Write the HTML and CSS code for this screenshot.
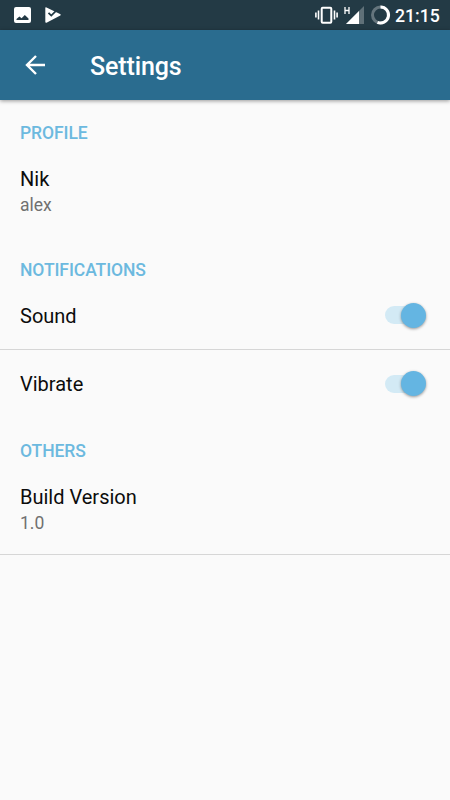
FILE: index.html
```html
<!DOCTYPE html>
<html lang="en">
<head>
<meta charset="utf-8">
<title>Settings</title>
<link rel="stylesheet" href="styles.css">
</head>
<body>
<div class="status">
  <svg class="notices" width="70" height="30" viewBox="0 0 70 30">
    <path fill="#fff" fill-rule="evenodd" d="M16 7h13a2 2 0 0 1 2 2v12a2 2 0 0 1-2 2H16a2 2 0 0 1-2-2V9a2 2 0 0 1 2-2zM16.500 20h12v-1.500l-3.700-3.500-3.200 3.300-2.200-1.800-2.900 2.500z"/>
    <path fill="#fff" d="M46 7.200L60.500 14.300Q61 15 60.300 15.600L46.500 22.800Q45.300 23 45.300 22V8Q45.300 7 46 7.200z"/>
    <path fill="none" stroke="#233a45" stroke-width="1.800" d="M48.500 12.800l2.800 2.800 6.200-6.200"/>
  </svg>
  <svg class="system" width="85" height="30" viewBox="310 0 85 30">
    <g fill="none" stroke="#fff">
      <rect x="321.700" y="7.700" width="9.600" height="15" rx="1" stroke-width="2"/>
      <path stroke-width="1.600" d="M318.500 10.500v9M315.900 12.500v5M334.500 10.500v9M337.100 12.500v5"/>
      <path stroke-width="1.300" d="M345 7v7M349 7v7M345 10.500h4"/>
    </g>
    <path fill="#5f7078" d="M364 6v18H346z"/>
    <path fill="#fff" d="M359 11V24H346z"/>
    <circle cx="380.500" cy="15" r="8" fill="none" stroke="#65757d" stroke-width="3"/>
    <path fill="none" stroke="#fff" stroke-width="3" d="M380.500 7a8 8 0 1 1-3 15.400"/>
  </svg>
  <span class="clock">21:15</span>
</div>
<header class="appbar">
  <svg class="back" width="20" height="20" viewBox="0 0 20 20"><path fill="none" stroke="#fff" stroke-width="2.400" d="M20 10H2M11 1L2 10l9 9"/></svg>
  <h1 class="heading">Settings</h1>
</header>
<main>
  <section>
    <h2 class="category">PROFILE</h2>
    <div class="entry"><div class="title">Nik</div><div class="summary">alex</div></div>
  </section>
  <section>
    <h2 class="category">NOTIFICATIONS</h2>
    <div class="option divided"><span class="title">Sound</span><span class="switch"><span class="thumb"></span></span></div>
    <div class="option"><span class="title">Vibrate</span><span class="switch"><span class="thumb"></span></span></div>
  </section>
  <section>
    <h2 class="category">OTHERS</h2>
    <div class="entry divided last"><div class="title">Build Version</div><div class="summary">1.0</div></div>
  </section>
</main>
</body>
</html>
```
FILE: styles.css
```css
* { box-sizing: border-box; }
body {
  margin: 0;
  min-height: 800px;
  background: #fafafa;
  color: #0c0c0c;
  font-family: Roboto, sans-serif;
}
.status {
  display: flex;
  height: 30px;
  background: #233a45;
}
.status svg { flex: none; }
.system { margin-left: auto; }
.clock {
  width: 55px;
  color: #fff;
  font-size: 17.7px;
  font-weight: 500;
  line-height: 32px;
}
.appbar {
  display: flex;
  align-items: center;
  height: 70px;
  padding-left: 25px;
  background: #2a6c8f;
  box-shadow: 0 1px 4px rgba(0, 0, 0, .4);
}
.heading {
  margin: 4px 0 0 45px;
  color: #fff;
  font-size: 25px;
  font-weight: 500;
  line-height: 30px;
  letter-spacing: -.12px;
}
.category {
  margin: 0;
  padding: 21px 20px 0;
  color: #6cb9df;
  font-size: 17.5px;
  font-weight: 500;
  line-height: 24px;
  letter-spacing: -.08px;
}
.title {
  font-size: 20px;
  line-height: 26px;
}
.summary {
  color: #707070;
  font-size: 17.5px;
  line-height: 26px;
}
.entry { padding: 21px 20px 19px; }
.last { padding-bottom: 18px; }
.option {
  display: flex;
  align-items: center;
  justify-content: space-between;
  height: 68px;
  padding: 0 24px 0 20px;
}
.divided { border-bottom: 1px solid #d6d6d6; }
.switch {
  display: flex;
  align-items: center;
  justify-content: flex-end;
  width: 41px;
  height: 18px;
  margin-bottom: 1px;
  border-radius: 9px;
  background: linear-gradient(90deg, #d3eaf5 30px, transparent 30px);
}
.thumb {
  flex: none;
  width: 25px;
  height: 25px;
  border-radius: 50%;
  background: #64b5e2;
  box-shadow: 0 1px 3px rgba(0, 0, 0, .4);
}
```
